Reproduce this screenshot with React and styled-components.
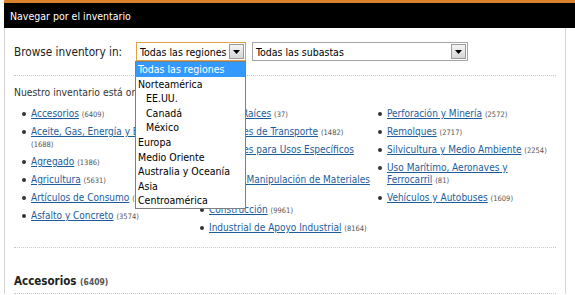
import React from 'react';
import styled, { createGlobalStyle } from 'styled-components';

const Global = createGlobalStyle`
  html, body {
    margin: 0;
    padding: 0;
    background: #ffffff;
    overflow: hidden;
  }
  body {
    font-family: "DejaVu Sans Condensed", "DejaVu Sans", Tahoma, sans-serif;
    color: #333333;
  }
`;

const Page = styled.div`
  width: 571px;
  padding-left: 4px;
`;

const Header = styled.div`
  border-top: 3px solid #d9822b;
  background: #000000;
  height: 25px;
  display: flex;
  align-items: center;
  padding-left: 6px;
`;

const Title = styled.div`
  color: #ffffff;
  font-size: 10.5px;
`;

const Panel = styled.div`
  width: 542px;
  border-left: 1px solid #d4d4d4;
  border-right: 1px solid #d4d4d4;
  padding: 14px 9px 0 9px;
`;

const BrowseRow = styled.div`
  display: flex;
  align-items: center;
  height: 19px;
`;

const BrowseLabel = styled.div`
  width: 122px;
  font-size: 11.7px;
  color: #222222;
`;

const SelectWrap = styled.div`
  position: relative;
  margin-right: 6px;
`;

const Select = styled.div`
  box-sizing: border-box;
  width: ${(p) => p.$width}px;
  height: 19px;
  border: 1px solid ${(p) => (p.$focused ? '#e3a246' : '#a5a5a5')};
  display: flex;
  align-items: center;
  justify-content: space-between;
  padding: 0 1px 0 3px;
  font-size: 10.5px;
  color: #000000;
  background: #ffffff;
  white-space: nowrap;
`;

const ArrowButton = styled.div`
  box-sizing: border-box;
  width: 15px;
  height: 15px;
  border: 1px solid #9a9a9a;
  background: linear-gradient(#f4f4f4, #d6d6d6);
  display: flex;
  align-items: center;
  justify-content: center;
`;

const Listbox = styled.ul`
  position: absolute;
  left: -1px;
  top: 19px;
  width: 111px;
  box-sizing: border-box;
  margin: 0;
  padding: 0;
  list-style: none;
  background: #ffffff;
  border: 1px solid #7f7f7f;
  z-index: 5;
`;

const Option = styled.li`
  height: 14.6px;
  line-height: 14.6px;
  font-size: 10.5px;
  padding-left: ${(p) => (p.$sub ? 10 : 2)}px;
  color: ${(p) => (p.$selected ? '#ffffff' : '#000000')};
  background: ${(p) => (p.$selected ? '#3399ff' : 'transparent')};
  white-space: nowrap;
`;

const Separator = styled.div`
  border-top: 1px dotted #c8c8c8;
  margin: ${(p) => p.$margin || '14px 0 0 0'};
`;

const Intro = styled.div`
  font-size: 10.3px;
  color: #333333;
  margin-top: 10px;
  line-height: 13px;
`;

const Columns = styled.div`
  display: grid;
  grid-template-columns: 178px 178px 180px;
  margin-top: 9px;
`;

const CategoryList = styled.ul`
  margin: 0;
  padding: 0 0 0 17px;
  list-style: none;
`;

const Item = styled.li`
  position: relative;
  font-size: 10px;
  line-height: 12px;
  margin-bottom: 6px;

  &::before {
    content: '';
    position: absolute;
    left: -9px;
    top: 4px;
    width: 4px;
    height: 4px;
    border-radius: 50%;
    background: #333333;
  }
`;

const Link = styled.a`
  color: #1d5c9b;
  text-decoration: underline;
`;

const Count = styled.span`
  font-size: ${(p) => p.$size || 7.5}px;
  line-height: 1;
  color: #555555;
  white-space: nowrap;
`;

const SectionTitle = styled.div`
  margin-top: 26px;
  font-size: 11.5px;
  color: #222222;
  font-weight: bold;
  line-height: 14px;
`;

const Triangle = () => (
  <svg width="7" height="4" viewBox="0 0 7 4">
    <path d="M0 0 H7 L3.5 4 Z" fill="#000" />
  </svg>
);

const regions = [
  { label: 'Todas las regiones', selected: true },
  { label: 'Norteamérica' },
  { label: 'EE.UU.', sub: true },
  { label: 'Canadá', sub: true },
  { label: 'México', sub: true },
  { label: 'Europa' },
  { label: 'Medio Oriente' },
  { label: 'Australia y Oceanía' },
  { label: 'Asia' },
  { label: 'Centroamérica' },
];

const columns = [
  [
    ['Accesorios', 6409],
    ['Aceite, Gas, Energía y Electricidad', 1688],
    ['Agregado', 1386],
    ['Agricultura', 5631],
    ['Artículos de Consumo', 3012],
    ['Asfalto y Concreto', 3574],
  ],
  [
    ['Bienes Raíces', 37],
    ['Camiones de Transporte', 1482],
    ['Camiones para Usos Específicos', 4250],
    ['Carga y Manipulación de Materiales', 3920],
    ['Construcción', 9961],
    ['Industrial de Apoyo Industrial', 8164],
  ],
  [
    ['Perforación y Minería', 2572],
    ['Remolques', 2717],
    ['Silvicultura y Medio Ambiente', 2254],
    ['Uso Marítimo, Aeronaves y Ferrocarril', 81],
    ['Vehículos y Autobuses', 1609],
  ],
];

export default function App() {
  return (
    <Page>
      <Global />
      <Header>
        <Title>Navegar por el inventario</Title>
      </Header>
      <Panel>
        <BrowseRow>
          <BrowseLabel>Browse inventory in:</BrowseLabel>
          <SelectWrap>
            <Select $width={110} $focused>
              <span>Todas las regiones</span>
              <ArrowButton>
                <Triangle />
              </ArrowButton>
            </Select>
            <Listbox>
              {regions.map((r) => (
                <Option key={r.label} $sub={r.sub} $selected={r.selected}>
                  {r.label}
                </Option>
              ))}
            </Listbox>
          </SelectWrap>
          <Select $width={216}>
            <span>Todas las subastas</span>
            <ArrowButton>
              <Triangle />
            </ArrowButton>
          </Select>
        </BrowseRow>
        <Separator />
        <Intro>Nuestro inventario está organizado así:</Intro>
        <Columns>
          {columns.map((col, i) => (
            <CategoryList key={i}>
              {col.map(([name, count]) => (
                <Item key={name}>
                  <Link href="#">{name}</Link> <Count>({count})</Count>
                </Item>
              ))}
            </CategoryList>
          ))}
        </Columns>
        <Separator $margin="7px 0 0 0" />
        <SectionTitle>
          Accesorios <Count $size={8.5}>(6409)</Count>
        </SectionTitle>
        <Separator $margin="5px 0 0 0" />
      </Panel>
    </Page>
  );
}
